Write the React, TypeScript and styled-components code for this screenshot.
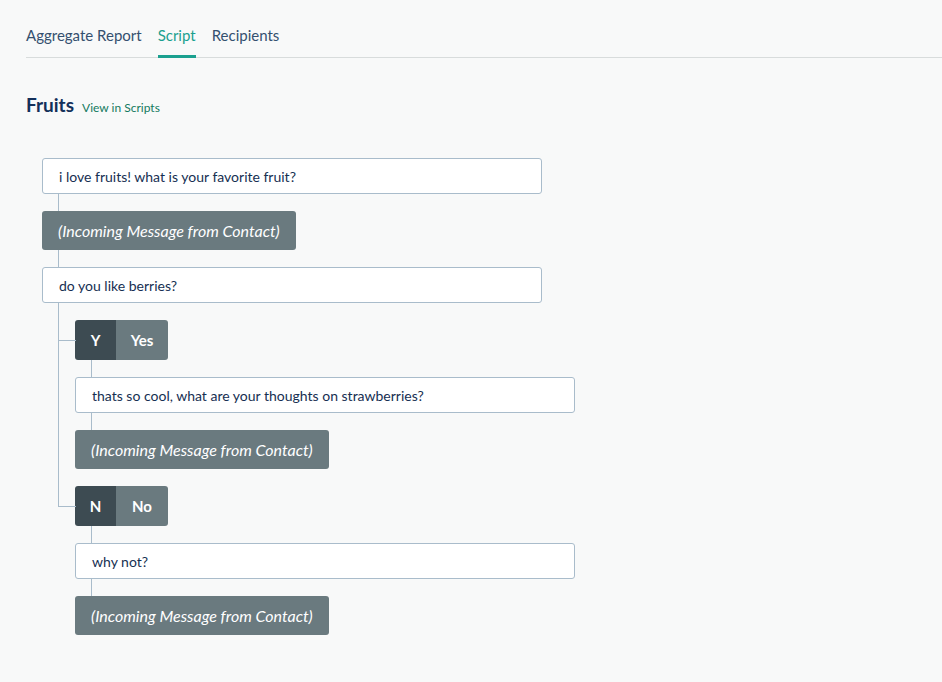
import styled, { createGlobalStyle } from "styled-components";

type Node =
    | { kind: "message"; text: string }
    | { kind: "incoming" }
    | { kind: "branches"; options: { key: string; label: string; nodes: Node[] }[] };

const script: Node[] = [
    { kind: "message", text: "i love fruits! what is your favorite fruit?" },
    { kind: "incoming" },
    { kind: "message", text: "do you like berries?" },
    {
        kind: "branches",
        options: [
            {
                key: "Y",
                label: "Yes",
                nodes: [
                    { kind: "message", text: "thats so cool, what are your thoughts on strawberries?" },
                    { kind: "incoming" },
                ],
            },
            {
                key: "N",
                label: "No",
                nodes: [{ kind: "message", text: "why not?" }, { kind: "incoming" }],
            },
        ],
    },
];

const tabs = ["Aggregate Report", "Script", "Recipients"];

function Flow({ nodes }: { nodes: Node[] }) {
    return (
        <Column>
            {nodes.map((n, i) => (
                <Step key={i}>
                    {i > 0 && n.kind !== "branches" && <Connector />}
                    {n.kind === "message" && <Message>{n.text}</Message>}
                    {n.kind === "incoming" && <Incoming>(Incoming Message from Contact)</Incoming>}
                    {n.kind === "branches" && (
                        <Branches>
                            {n.options.map((o, j) => (
                                <Branch key={o.key} $last={j === n.options.length - 1}>
                                    <Choice>
                                        <ChoiceKey>{o.key}</ChoiceKey>
                                        <ChoiceLabel>{o.label}</ChoiceLabel>
                                    </Choice>
                                    <Connector />
                                    <Flow nodes={o.nodes} />
                                </Branch>
                            ))}
                        </Branches>
                    )}
                </Step>
            ))}
        </Column>
    );
}

export default function App() {
    return (
        <>
            <GlobalStyle />
            <Page>
                <Tabs>
                    {tabs.map((t) => (
                        <Tab key={t} $active={t === "Script"}>
                            {t}
                        </Tab>
                    ))}
                </Tabs>
                <Heading>
                    <Title>Fruits</Title>
                    <TitleLink>View in Scripts</TitleLink>
                </Heading>
                <Tree>
                    <Flow nodes={script} />
                </Tree>
            </Page>
        </>
    );
}

const GlobalStyle = createGlobalStyle`
    html, body {
        margin: 0;
        background: #f8f9f9;
    }
    body {
        font-family: "Lato", "Noto Sans", sans-serif;
        color: #1e3354;
    }
`;

const Page = styled.div`
    min-height: 682px;
    padding: 0 0 0 26px;
    box-sizing: border-box;
`;

const Tabs = styled.div`
    display: flex;
    gap: 16px;
    padding-top: 25px;
    border-bottom: 1px solid #d8dcdc;
`;

const Tab = styled.div<{ $active?: boolean }>`
    font-size: 15px;
    line-height: 20px;
    padding-bottom: 10px;
    color: ${(p) => (p.$active ? "#1aa08f" : "#34506f")};
    border-bottom: 3px solid ${(p) => (p.$active ? "#1aa08f" : "transparent")};
    margin-bottom: -1px;
`;

const Heading = styled.div`
    display: flex;
    align-items: baseline;
    gap: 8px;
    margin-top: 35px;
`;

const Title = styled.h2`
    margin: 0;
    font-size: 19px;
    font-weight: 700;
    color: #13305a;
`;

const TitleLink = styled.a`
    font-size: 12px;
    color: #137a60;
    cursor: pointer;
`;

const Tree = styled.div`
    margin-top: 42px;
    margin-left: 16px;
`;

const Column = styled.div`
    display: flex;
    flex-direction: column;
`;

const Step = styled.div`
    display: flex;
    flex-direction: column;
`;

const Connector = styled.div`
    height: 17px;
    margin-left: 16px;
    border-left: 1px solid #a9bccb;
`;

const Message = styled.div`
    width: 500px;
    height: 36px;
    box-sizing: border-box;
    display: flex;
    align-items: center;
    padding: 0 16px;
    background: #fff;
    border: 1px solid #a9bccb;
    border-radius: 3px;
    font-size: 14px;
    color: #162f52;
`;

const Incoming = styled.div`
    align-self: flex-start;
    height: 39px;
    box-sizing: border-box;
    display: flex;
    align-items: center;
    padding: 0 16px;
    background: #6a7a7f;
    border-radius: 3px;
    font-size: 16px;
    font-style: italic;
    color: #fff;
`;

const Branches = styled.div`
    display: flex;
    flex-direction: column;
    margin-left: 16px;
`;

const Branch = styled.div<{ $last?: boolean }>`
    position: relative;
    display: flex;
    flex-direction: column;
    padding-top: 17px;
    padding-left: 17px;

    &::before {
        content: "";
        position: absolute;
        left: 0;
        top: 0;
        width: 17px;
        height: 37px;
        border-left: 1px solid #a9bccb;
        border-bottom: 1px solid #a9bccb;
    }

    &::after {
        content: "";
        position: absolute;
        left: 0;
        top: 0;
        bottom: 0;
        display: ${(p) => (p.$last ? "none" : "block")};
        border-left: 1px solid #a9bccb;
    }
`;

const Choice = styled.div`
    align-self: flex-start;
    display: flex;
    height: 40px;
    border-radius: 3px;
    overflow: hidden;
    font-size: 15px;
    font-weight: 700;
    color: #fff;
`;

const ChoiceKey = styled.div`
    width: 41px;
    display: flex;
    align-items: center;
    justify-content: center;
    background: #3d4b52;
`;

const ChoiceLabel = styled.div`
    width: 52px;
    display: flex;
    align-items: center;
    justify-content: center;
    background: #6a7a7f;
`;
